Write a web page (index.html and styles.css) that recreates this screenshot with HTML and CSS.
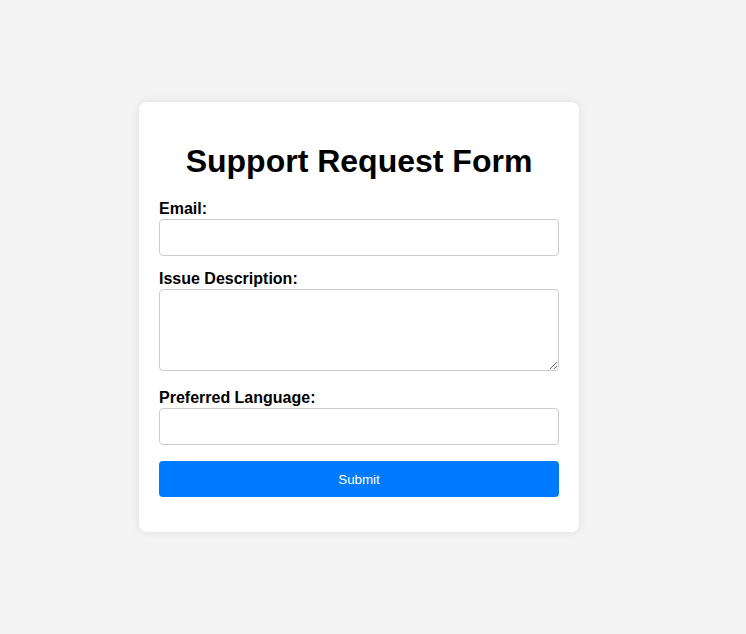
FILE: index.html
```html
<!DOCTYPE html>
<html lang="en">
<head>
<meta charset="utf-8">
<title>Support Request Form</title>
<link rel="stylesheet" href="styles.css">
</head>
<body>
<div class="card">
  <h1 class="title">Support Request Form</h1>
  <form class="form">
    <label class="label" for="email">Email:</label>
    <input class="field" id="email" type="email">
    <label class="label" for="issue">Issue Description:</label>
    <textarea class="field area" id="issue"></textarea>
    <label class="label" for="lang">Preferred Language:</label>
    <input class="field" id="lang" type="text">
    <button class="submit" type="button">Submit</button>
  </form>
</div>
</body>
</html>
```
FILE: styles.css
```css
html, body {
  margin: 0;
  height: 100%;
}
body {
  background: #f4f4f4;
  font-family: "Liberation Sans", Arial, sans-serif;
  display: flex;
  align-items: center;
  justify-content: center;
  padding-right: 28px;
  box-sizing: border-box;
}
.card {
  width: 440px;
  box-sizing: border-box;
  background: #fff;
  padding: 20px 20px 35px;
  border-radius: 8px;
  box-shadow: 0 0 10px rgba(0, 0, 0, 0.1);
}
.title {
  font-size: 32px;
  font-weight: bold;
  text-align: center;
  margin: 21px 0 20px;
  line-height: 37px;
  color: #000;
}
.form {
  display: flex;
  flex-direction: column;
}
.label {
  font-size: 16px;
  font-weight: bold;
  line-height: 18px;
  color: #000;
  margin-bottom: 1px;
}
.field {
  width: 100%;
  box-sizing: border-box;
  height: 37px;
  padding: 10px;
  border: 1px solid #ccc;
  border-radius: 4px;
  font-size: 13.33px;
  margin-bottom: 14px;
  background: #fff;
}
.area {
  height: 82px;
  margin-bottom: 18px;
  font-family: "Liberation Mono", monospace;
}
.submit {
  height: 36px;
  margin-top: 2px;
  background: #007bff;
  color: #fff;
  border: none;
  border-radius: 4px;
  font-family: "Liberation Sans", Arial, sans-serif;
  font-size: 13.33px;
}
```
